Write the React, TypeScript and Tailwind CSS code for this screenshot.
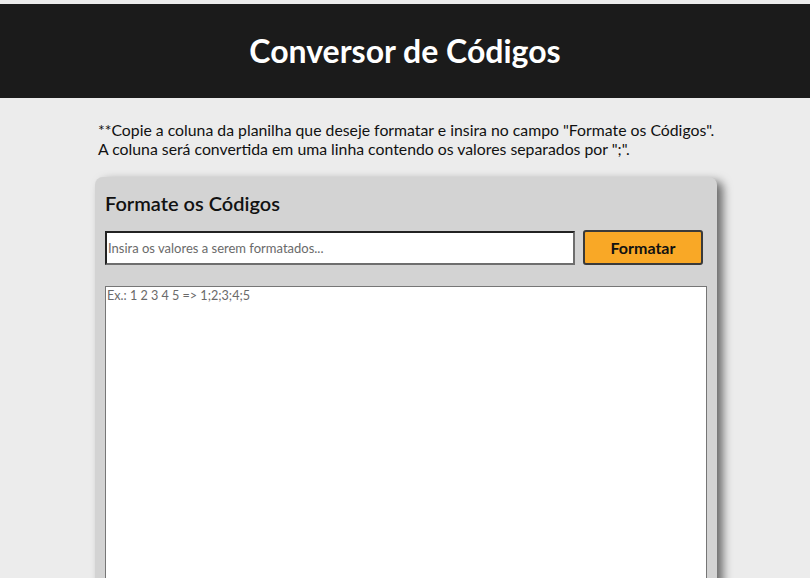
import React from "react";

export default function App() {
  return (
    <div className="min-h-[578px] bg-[#ececec] pt-[4px]" style={{ fontFamily: "Lato, 'Open Sans', sans-serif" }}>
      <header className="h-[94px] bg-[#1b1b1b] flex items-center justify-center">
        <h1 className="text-white text-[32px] font-bold leading-none">Conversor de Códigos</h1>
      </header>
      <div className="w-[640px] ml-[98px] pt-[22px]">
        <p className="text-[15.8px] leading-[19px] text-[#111]">
          **Copie a coluna da planilha que deseje formatar e insira no campo "Formate os Códigos".
          <br />
          A coluna será convertida em uma linha contendo os valores separados por ";".
        </p>
      </div>
      <div className="w-[622px] mt-[19px] ml-[95px] bg-[#d3d3d3] rounded-[8px] shadow-[6px_4px_10px_rgba(0,0,0,0.55)] px-[10px] pt-[14px] h-[420px]">
        <h2 className="text-[20px] font-semibold text-[#111] leading-[25px]">Formate os Códigos</h2>
        <div className="flex items-center gap-[8px] mt-[14px]">
          <input
            className="w-[470px] h-[34px] bg-white border-2 border-t-[#222] border-l-[#222] border-b-[#6e6e6e] border-r-[#6e6e6e] px-[1px] text-[13px] text-[#333] placeholder:text-[#6a6a6a] outline-none"
            placeholder="Insira os valores a serem formatados..."
          />
          <button className="w-[120px] h-[35px] bg-[#f9a826] border-2 border-[#3a3a3a] rounded-[3px] text-[16px] font-bold text-[#111]">
            Formatar
          </button>
        </div>
        <textarea
          className="block mt-[21px] w-[602px] h-[320px] bg-white border border-[#767676] px-[1px] py-0 text-[12.6px] placeholder:text-[#6a6a6a] outline-none resize-none"
          placeholder="Ex.: 1 2 3 4 5 => 1;2;3;4;5"
        />
      </div>
    </div>
  );
}
